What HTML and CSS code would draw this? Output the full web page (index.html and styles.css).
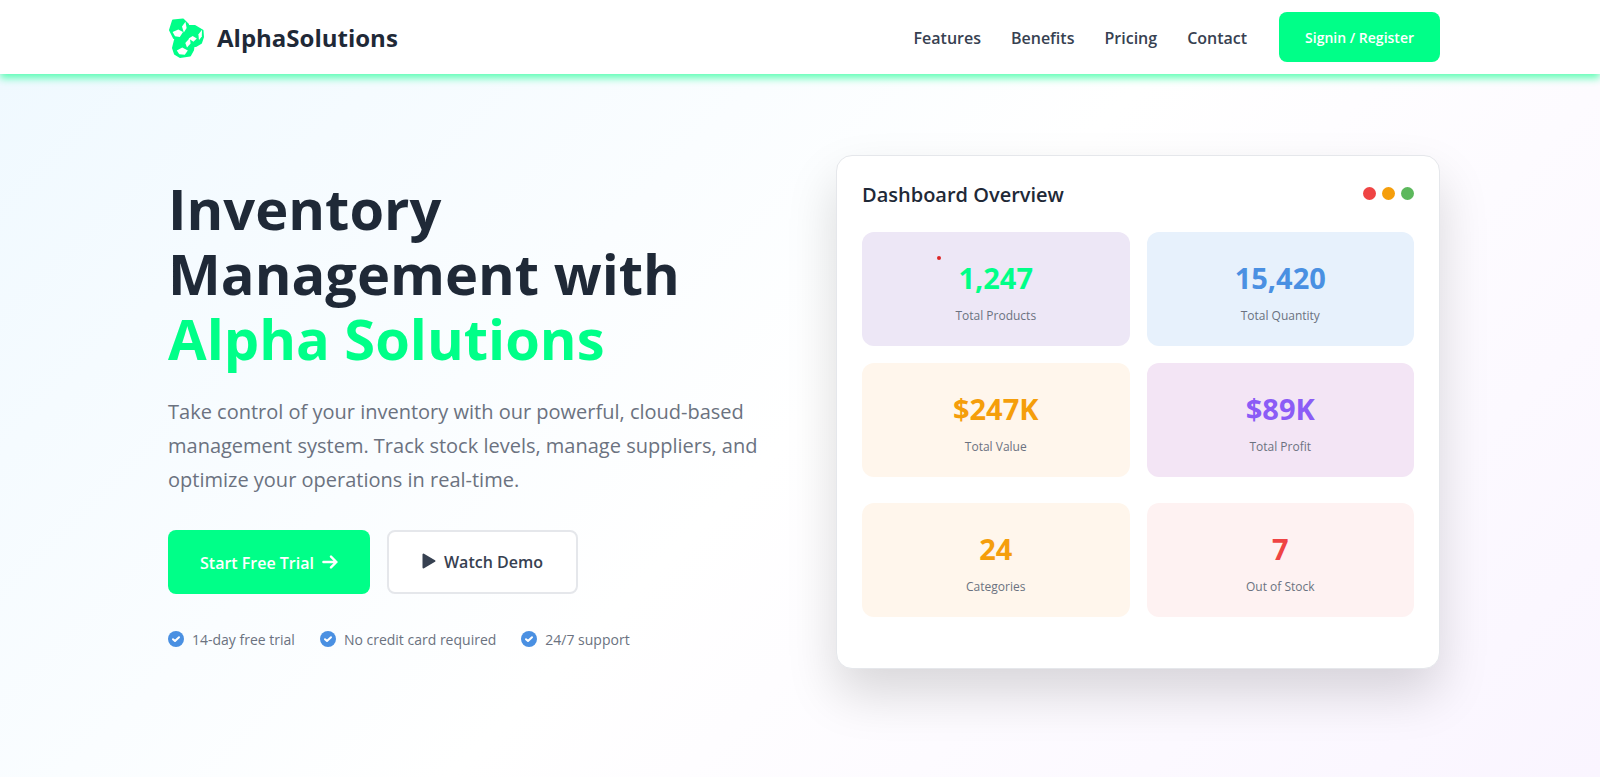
FILE: index.html
```html
<!DOCTYPE html>
<html lang="en">
<head>
<meta charset="utf-8">
<meta name="viewport" content="width=device-width, initial-scale=1">
<title>AlphaSolutions</title>
<link rel="stylesheet" href="styles.css">
</head>
<body>
<header class="header">
  <div class="container header-inner">
    <a class="brand" href="#">
      <svg class="brand-logo" viewBox="0 0 37 41" aria-hidden="true">
        <g class="logo-body">
          <path d="M5 2.500L15 1.500L20 6.500L20 16L12 22L6 20L2 12Z"/>
          <path d="M20 8L27 8L34.500 12.500L35 19L33 25L28 28L21 28L15 22L17 12Z"/>
          <path d="M7 22L15 19L26 25L25 32L22 37.500L12 39L7 36L5 30Z"/>
        </g>
        <g class="logo-faces">
          <path d="M4.600 14L10.300 11.600L15 14L11.800 19L7 18.200Z"/>
          <path d="M14 8.500L17.500 3.800L18.600 10L15.800 14.500Z"/>
          <path d="M20.600 20.600L24.700 17.900L28.800 20.500L25.400 23.800Z"/>
          <path d="M30.400 16.500L34 11.800L33.800 18.400L31 22Z"/>
          <path d="M8.800 32.400L14.300 29.600L19.800 32.400L16.800 36.800L11.300 36.300Z"/>
          <path d="M17.300 25L21.800 19.900L22.600 25.600L19 29.400Z"/>
        </g>
      </svg>
      <span class="brand-name">AlphaSolutions</span>
    </a>
    <div class="nav-area">
      <nav class="nav">
        <a class="nav-link" href="#">Features</a>
        <a class="nav-link" href="#">Benefits</a>
        <a class="nav-link" href="#">Pricing</a>
        <a class="nav-link" href="#">Contact</a>
      </nav>
      <button class="signin" type="button">Signin / Register</button>
    </div>
  </div>
</header>
<main class="hero">
  <div class="container hero-grid">
    <section class="intro">
      <h1 class="headline">Inventory Management with <span class="headline-accent">Alpha Solutions</span></h1>
      <p class="lead">Take control of your inventory with our powerful, cloud-based management system. Track stock levels, manage suppliers, and optimize your operations in real-time.</p>
      <div class="actions">
        <button class="btn btn-primary" type="button">Start Free Trial
          <svg class="icon-arrow" viewBox="0 0 16 14" aria-hidden="true"><path d="M1.400 7H14.400M9 1.600L14.400 7L9 12.400"/></svg>
        </button>
        <button class="btn btn-outline" type="button">
          <svg class="icon-play" viewBox="0 0 14 16" aria-hidden="true"><path d="M1.500 1.500V14.500L12.500 8Z"/></svg>
          Watch Demo
        </button>
      </div>
      <ul class="perks">
        <li class="perk"><svg class="icon-check" viewBox="0 0 16 16" aria-hidden="true"><circle cx="8" cy="8" r="8"/><path d="M5 8.200L7 10L11 6.200"/></svg>14-day free trial</li>
        <li class="perk"><svg class="icon-check" viewBox="0 0 16 16" aria-hidden="true"><circle cx="8" cy="8" r="8"/><path d="M5 8.200L7 10L11 6.200"/></svg>No credit card required</li>
        <li class="perk"><svg class="icon-check" viewBox="0 0 16 16" aria-hidden="true"><circle cx="8" cy="8" r="8"/><path d="M5 8.200L7 10L11 6.200"/></svg>24/7 support</li>
      </ul>
    </section>
    <section class="card">
      <div class="card-head">
        <h2 class="card-title">Dashboard Overview</h2>
        <div class="dots"><span class="dot dot-red"></span><span class="dot dot-amber"></span><span class="dot dot-green"></span></div>
      </div>
      <div class="stats">
        <div class="stat stat-products"><div class="value">1,247</div><div class="label">Total Products</div><span class="marker"></span></div>
        <div class="stat stat-quantity"><div class="value">15,420</div><div class="label">Total Quantity</div></div>
        <div class="stat stat-value"><div class="value">$247K</div><div class="label">Total Value</div></div>
        <div class="stat stat-profit"><div class="value">$89K</div><div class="label">Total Profit</div></div>
      </div>
      <div class="stats">
        <div class="stat stat-value"><div class="value">24</div><div class="label">Categories</div></div>
        <div class="stat stat-out"><div class="value">7</div><div class="label">Out of Stock</div></div>
      </div>
    </section>
  </div>
</main>
</body>
</html>
```

FILE: styles.css
```css
* { box-sizing: border-box; }

body {
  margin: 0;
  min-height: 100vh;
  display: flex;
  flex-direction: column;
  font-family: "Open Sans", "Noto Sans", sans-serif;
  color: #1f2937;
  background: #fff;
}

h1, h2, p, ul { margin: 0; padding: 0; }

.container {
  width: 100%;
  max-width: 1320px;
  margin: 0 auto;
  padding: 0 20px 0 28px;
}

.header {
  position: relative;
  z-index: 1;
  background: #fff;
  box-shadow: 0 4px 8px rgba(0, 255, 136, 0.65);
}

.header-inner {
  display: flex;
  align-items: center;
  justify-content: space-between;
  padding-top: 12px;
  padding-bottom: 12px;
}

.brand {
  display: flex;
  align-items: center;
  gap: 12px;
  padding-top: 2px;
  color: #1f2937;
  text-decoration: none;
}

.brand-logo { width: 37px; height: 41px; }
.logo-body { fill: #00ff88; stroke: #00ff88; stroke-width: 2; stroke-linejoin: round; }
.logo-faces { fill: #fff; }

.brand-name { font-size: 24px; font-weight: 700; line-height: 32px; }

.nav-area { display: flex; align-items: center; gap: 32px; }
.nav { display: flex; gap: 30px; padding-top: 2px; }

.nav-link {
  color: #374151;
  font-size: 16px;
  font-weight: 600;
  line-height: 24px;
  text-decoration: none;
}

.signin {
  height: 50px;
  padding: 2px 26px 0;
  border: 0;
  border-radius: 8px;
  background: #00ff88;
  color: #fff;
  font: 600 14px/20px "Open Sans", "Noto Sans", sans-serif;
}

.hero {
  flex: 1;
  padding: 81px 0 100px;
  background: linear-gradient(135deg, #f0f9ff 0%, #fff 50%, #faf5ff 100%);
}

.hero-grid {
  display: grid;
  grid-template-columns: 1fr 1fr;
  gap: 64px;
  align-items: start;
}

.intro { padding-top: 21px; }

.headline {
  margin-bottom: 24px;
  font-size: 56px;
  font-weight: 700;
  line-height: 65px;
}

.headline-accent { display: block; color: #00ff88; }

.lead {
  margin-bottom: 33px;
  color: #6b7280;
  font-size: 20px;
  line-height: 34px;
}

.actions { display: flex; align-items: center; gap: 17px; margin-bottom: 34px; }

.btn {
  display: flex;
  align-items: center;
  gap: 8px;
  height: 64px;
  padding: 2px 32px 0;
  border: 0;
  border-radius: 8px;
  font: 600 16px/24px "Open Sans", "Noto Sans", sans-serif;
}

.btn-primary { background: #00ff88; color: #fff; }
.btn-outline { padding: 0 33px; border: 2px solid #e5e7eb; background: #fff; color: #374151; }

.icon-arrow { width: 16px; height: 14px; margin-bottom: 2px; fill: none; stroke: #fff; stroke-width: 2.400; stroke-linecap: round; stroke-linejoin: round; }
.icon-play { width: 14px; height: 16px; margin-bottom: 2px; fill: #374151; stroke: #374151; stroke-width: 2; stroke-linejoin: round; }

.perks { display: flex; gap: 25px; list-style: none; color: #6b7280; font-size: 14px; line-height: 24px; }
.perk { display: flex; align-items: center; gap: 8px; }
.icon-check { width: 16px; height: 16px; margin-bottom: 2px; }
.icon-check circle { fill: #4a90e2; }
.icon-check path { fill: none; stroke: #fff; stroke-width: 2; stroke-linecap: round; stroke-linejoin: round; }

.card {
  display: grid;
  gap: 26px;
  padding: 28px 25px 51px;
  border: 1px solid #e5e7eb;
  border-radius: 16px;
  background: #fff;
  box-shadow: 0 25px 50px rgba(0, 0, 0, 0.15);
}

.card-head { display: flex; align-items: flex-start; justify-content: space-between; }
.card-title { font-size: 20px; font-weight: 600; line-height: 22px; }

.dots { display: flex; gap: 6px; padding-top: 3px; }
.dot { width: 13px; height: 13px; border-radius: 50%; }
.dot-red { background: #ef4444; }
.dot-amber { background: #f59e0b; }
.dot-green { background: #5cb85c; }

.stats { display: grid; grid-template-columns: 1fr 1fr; gap: 17px; }

.stat {
  position: relative;
  padding: 26px 16px 18px;
  border-radius: 12px;
  text-align: center;
}

.value { font-size: 29px; font-weight: 700; line-height: 40px; }
.label { margin-top: 6px; color: #6b7280; font-size: 12px; line-height: 24px; }

.stat-products { background: #ede7f6; }
.stat-products .value { color: #00ff88; }
.stat-quantity { background: #e7f1fc; }
.stat-quantity .value { color: #4a90e2; }
.stat-value { background: #fff6ec; }
.stat-value .value { color: #f59e0b; }
.stat-profit { background: #f3e5f5; }
.stat-profit .value { color: #8b5cf6; }
.stat-out { background: #fef2f2; }
.stat-out .value { color: #ef4444; }

.marker {
  position: absolute;
  top: 24px;
  left: 75px;
  width: 4px;
  height: 4px;
  border-radius: 50%;
  background: #dc2626;
}
```
